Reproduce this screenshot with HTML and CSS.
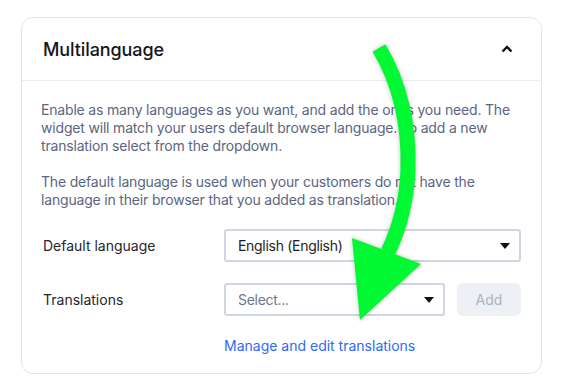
FILE: index.html
```html
<!DOCTYPE html>
<html lang="en">
<head>
    <meta charset="UTF-8">
    <meta name="viewport" content="width=device-width, initial-scale=1.0">
    <title>Multilanguage</title>
    <link rel="stylesheet" href="styles.css">
</head>
<body>
    <div class="card">
        <div class="card-head">
            <h2>Multilanguage</h2>
            <svg class="chevron" width="12" height="8" viewBox="0 0 12 8">
                <path d="M1.5 6.5 L6 2 L10.5 6.5" fill="none" stroke="#111" stroke-width="2.4"/>
            </svg>
        </div>
        <div class="card-body">
            <p>Enable as many languages as you want, and add the ones you need. The widget will match your users default browser language. To add a new translation select from the dropdown.</p>
            <p>The default language is used when your customers do not have the language in their browser that you added as translation.</p>

            <div class="row">
                <span class="label">Default language</span>
                <div class="select">
                    <span>English (English)</span>
                    <span class="caret"></span>
                </div>
            </div>
            <div class="row">
                <span class="label">Translations</span>
                <div class="field-group">
                    <div class="select placeholder">
                        <span>Select...</span>
                        <span class="caret"></span>
                    </div>
                    <button class="add-btn" disabled>Add</button>
                </div>
            </div>
            <div class="row">
                <span></span>
                <a href="#" class="manage">Manage and edit translations</a>
            </div>
        </div>
    </div>

    <!-- green arrow pointing at the translations dropdown -->
    <svg class="arrow" width="563" height="391" viewBox="0 0 563 391">
        <path d="M379 48 Q 410 100 408 170 Q 406 215 388 252" fill="none" stroke="#00f932" stroke-width="15"/>
        <polygon points="352,238 421,264 360,320" fill="#00f932"/>
    </svg>
</body>
</html>
```

FILE: styles.css
```css
* {
    margin: 0;
    padding: 0;
    box-sizing: border-box;
    font-family: 'Inter', 'Noto Sans', sans-serif;
}

body {
    background: #fff;
    width: 563px;
    height: 391px;
    overflow: hidden;
}

.card {
    margin: 17px 0 0 21px;
    width: 521px;
    border: 1px solid #e1e5ee;
    border-radius: 12px;
}

.card-head {
    height: 63px;
    padding: 0 28px 0 21px;
    display: flex;
    align-items: center;
    justify-content: space-between;
    border-bottom: 1px solid #e8ebf1;
}

.card-head h2 {
    font-size: 18px;
    font-weight: 500;
    color: #14151a;
    letter-spacing: -0.1px;
}

.chevron {
    display: block;
}

.card-body {
    padding: 20px 19px 18px 19px;
}

.card-body p {
    font-size: 14px;
    line-height: 18px;
    color: #5c6580;
    letter-spacing: -0.18px;
    margin-bottom: 18px;
}

.card-body p + p {
    margin-bottom: 20px;
}

.row {
    display: grid;
    grid-template-columns: 183px 297px;
    align-items: center;
    margin-bottom: 21px;
}

.row:last-child {
    margin-bottom: 0;
}

.label {
    font-size: 14px;
    color: #26262e;
    padding-left: 2px;
}

.select {
    height: 33px;
    border: 2px solid #cfd5e0;
    border-radius: 3px;
    display: flex;
    align-items: center;
    justify-content: space-between;
    padding: 0 9px 0 12px;
    font-size: 14px;
    letter-spacing: -0.3px;
    color: #1d1d24;
}

.select.placeholder {
    flex: 1;
    color: #6e778f;
}

.caret {
    width: 0;
    height: 0;
    border-left: 5px solid transparent;
    border-right: 5px solid transparent;
    border-top: 6px solid #111;
}

.field-group {
    display: flex;
    gap: 12px;
}

.add-btn {
    width: 64px;
    height: 33px;
    border: none;
    border-radius: 6px;
    background: #edf0f5;
    color: #a9b2c4;
    font-size: 14px;
}

.manage {
    font-size: 14px;
    color: #2d6af5;
    text-decoration: none;
    line-height: 18px;
}

.arrow {
    position: absolute;
    left: 0;
    top: 0;
    filter: drop-shadow(0 0 2px rgba(0, 0, 0, 0.25));
}
```
